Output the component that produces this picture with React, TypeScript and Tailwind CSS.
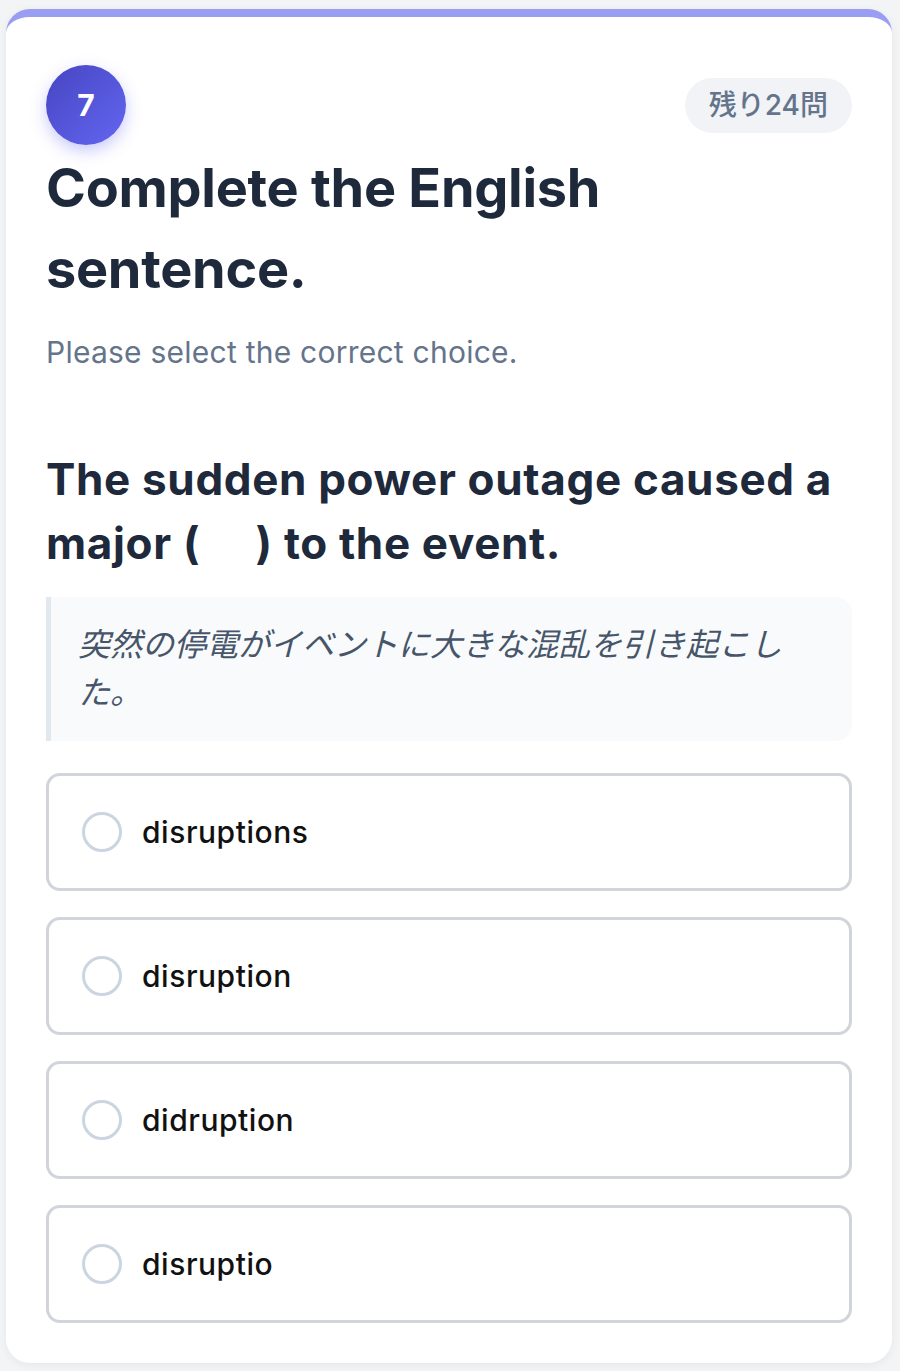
const choices = ["disruptions", "disruption", "didruption", "disruptio"];

const QuizCard = () => {
  return (
    <div className="rounded-3xl border-t-8 border-[#9a9ef3] bg-white px-10 pt-12 pb-10 shadow-[0_2px_10px_rgba(15,23,42,0.06)]">
      {/* header */}
      <div className="flex h-20 items-center justify-between">
        <div className="flex h-20 w-20 items-center justify-center rounded-full bg-gradient-to-br from-[#4645c2] to-[#6366f1] text-[30px] font-bold text-white shadow-[0_6px_16px_rgba(99,102,241,0.35)]">
          7
        </div>
        <div className="flex h-[55px] items-center rounded-full bg-[#f1f3f6] px-6 text-[28px] font-medium text-[#64748b]">
          残り24問
        </div>
      </div>

      <h1 className="mt-[2px] max-w-[780px] text-[54px] leading-[81px] font-bold tracking-[-0.005em] text-[#1e293b]">
        Complete the English sentence.
      </h1>
      <p className="mt-[21px] text-[30px] leading-[45px] tracking-[0.008em] text-[#64748b]">
        Please select the correct choice.
      </p>

      <h2 className="mt-[72px] text-[44px] leading-[64px] font-bold tracking-[0.015em] text-[#1e293b]">
        The sudden power outage caused a major (&nbsp;&nbsp;&nbsp;&nbsp;&nbsp;) to the event.
      </h2>

      <div className="mt-[22px] rounded-r-2xl border-l-[5px] border-[#e2e8f0] bg-[#f8fafc] py-6 pr-8 pl-[27px]">
        <p className="text-[32px] leading-[48px] text-[#475569] italic">
          突然の停電がイベントに大きな混乱を引き起こした。
        </p>
      </div>

      <div className="mt-[32px] flex flex-col gap-[26px]">
        {choices.map((c) => (
          <button
            key={c}
            className="flex h-[118px] items-center gap-5 rounded-[14px] border-[3px] border-[#d1d5db] bg-white pl-[33px] text-left"
          >
            <span className="h-10 w-10 shrink-0 rounded-full border-[3px] border-[#cbd5e1]" />
            <span className="text-[30px] font-medium tracking-[0.018em] text-[#111111]">{c}</span>
          </button>
        ))}
      </div>
    </div>
  );
};

export default function App() {
  return (
    <div
      className="min-h-[1371px] bg-[#f3f4f6] pt-[9px] pr-2 pl-[6px]"
      style={{ fontFamily: 'Inter, "Noto Sans CJK JP", sans-serif' }}
    >
      <QuizCard />
    </div>
  );
}
